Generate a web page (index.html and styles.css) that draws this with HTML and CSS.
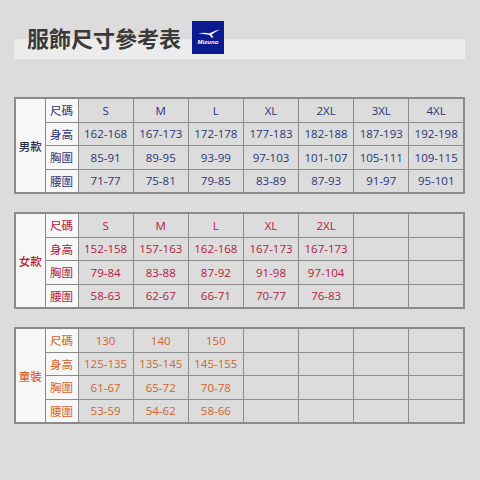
FILE: index.html
```html
<!DOCTYPE html>
<html lang="zh-Hant">
<head>
<meta charset="utf-8">
<title>服飾尺寸參考表</title>
<link rel="stylesheet" href="styles.css">
</head>
<body>
<div class="page">
  <div class="header">
    <h1 class="title">服飾尺寸參考表</h1>
    <div class="logo">
      <svg class="bird" viewBox="0 0 24 10" width="24" height="10">
        <path d="M1 4.2 C5 3.6 9 3.4 12 4.6 C15 3.2 19 1.6 23 0.6 C20 2.2 17 3.8 14.6 5.4 L16.4 8.6 L14.8 8.8 L12.6 6 C9 5.2 5 4.6 1 4.2 Z" fill="#fff"/>
      </svg>
      <span class="brand">Mizuno</span>
    </div>
  </div>

  <table class="size men">
    <colgroup><col class="c-label"><col class="c-key"><col><col><col><col><col><col><col></colgroup>
    <tr><td class="label" rowspan="4">男款</td><td class="key">尺碼</td><td>S</td><td>M</td><td>L</td><td>XL</td><td>2XL</td><td>3XL</td><td>4XL</td></tr>
    <tr><td class="key">身高</td><td>162-168</td><td>167-173</td><td>172-178</td><td>177-183</td><td>182-188</td><td>187-193</td><td>192-198</td></tr>
    <tr><td class="key">胸圍</td><td>85-91</td><td>89-95</td><td>93-99</td><td>97-103</td><td>101-107</td><td>105-111</td><td>109-115</td></tr>
    <tr><td class="key">腰圍</td><td>71-77</td><td>75-81</td><td>79-85</td><td>83-89</td><td>87-93</td><td>91-97</td><td>95-101</td></tr>
  </table>

  <table class="size women">
    <colgroup><col class="c-label"><col class="c-key"><col><col><col><col><col><col><col></colgroup>
    <tr><td class="label" rowspan="4">女款</td><td class="key">尺碼</td><td>S</td><td>M</td><td>L</td><td>XL</td><td>2XL</td><td></td><td></td></tr>
    <tr><td class="key">身高</td><td>152-158</td><td>157-163</td><td>162-168</td><td>167-173</td><td>167-173</td><td></td><td></td></tr>
    <tr><td class="key">胸圍</td><td>79-84</td><td>83-88</td><td>87-92</td><td>91-98</td><td>97-104</td><td></td><td></td></tr>
    <tr><td class="key">腰圍</td><td>58-63</td><td>62-67</td><td>66-71</td><td>70-77</td><td>76-83</td><td></td><td></td></tr>
  </table>

  <table class="size kids">
    <colgroup><col class="c-label"><col class="c-key"><col><col><col><col><col><col><col></colgroup>
    <tr><td class="label" rowspan="4">童裝</td><td class="key">尺碼</td><td>130</td><td>140</td><td>150</td><td></td><td></td><td></td><td></td></tr>
    <tr><td class="key">身高</td><td>125-135</td><td>135-145</td><td>145-155</td><td></td><td></td><td></td><td></td></tr>
    <tr><td class="key">胸圍</td><td>61-67</td><td>65-72</td><td>70-78</td><td></td><td></td><td></td><td></td></tr>
    <tr><td class="key">腰圍</td><td>53-59</td><td>54-62</td><td>58-66</td><td></td><td></td><td></td><td></td></tr>
  </table>
</div>
</body>
</html>
```

FILE: styles.css
```css
html, body {
  margin: 0;
  padding: 0;
  background: #dcdcdc;
}
body {
  width: 480px;
  height: 480px;
  overflow: hidden;
  font-family: "Open Sans", "Noto Sans CJK TC", sans-serif;
}
.page {
  padding: 21px 15px 0 14px;
  display: flex;
  flex-direction: column;
}
.header {
  width: 451px;
  height: 38px;
  display: flex;
  align-items: flex-start;
  gap: 10px;
  padding-left: 13px;
  box-sizing: border-box;
  background: linear-gradient(to bottom, transparent 18px, #ececec 18px);
}
.title {
  margin: 0;
  font-family: "Noto Sans CJK TC", sans-serif;
  font-weight: 700;
  font-size: 22px;
  line-height: 33px;
  color: #3a3a3a;
}
.logo {
  width: 32px;
  height: 33px;
  margin-left: 1px;
  background: #0b1a8f;
  display: flex;
  flex-direction: column;
  align-items: center;
  justify-content: center;
}
.bird {
  display: block;
  margin-left: 2px;
}
.brand {
  font-family: "Liberation Sans", sans-serif;
  font-style: italic;
  font-weight: 700;
  font-size: 6px;
  line-height: 7px;
  color: #fff;
  letter-spacing: 0.1px;
}
.size {
  width: 451px;
  table-layout: fixed;
  border-collapse: collapse;
  border: 2px solid #8a8a8a;
  margin-top: 38px;
}
.size + .size {
  margin-top: 18px;
}
.c-label { width: 30px; }
.c-key { width: 33px; }
.size td {
  height: 22.5px;
  padding: 0;
  border: 1px solid #8c8c8c;
  text-align: center;
  vertical-align: middle;
  font-size: 11.5px;
  font-weight: 500;
  background: #dcdcdc;
  white-space: nowrap;
}
.size td.label,
.size td.key {
  background: #f7f7f7;
  font-family: "Noto Sans CJK TC", sans-serif;
  font-size: 11.5px;
  font-weight: 400;
}
.size td.label { font-weight: 500; }
.men td { color: #2b3678; }
.men td.label { color: #2a2d4a; }
.women td { color: #b3203c; }
.kids td { color: #d2642c; }
```
